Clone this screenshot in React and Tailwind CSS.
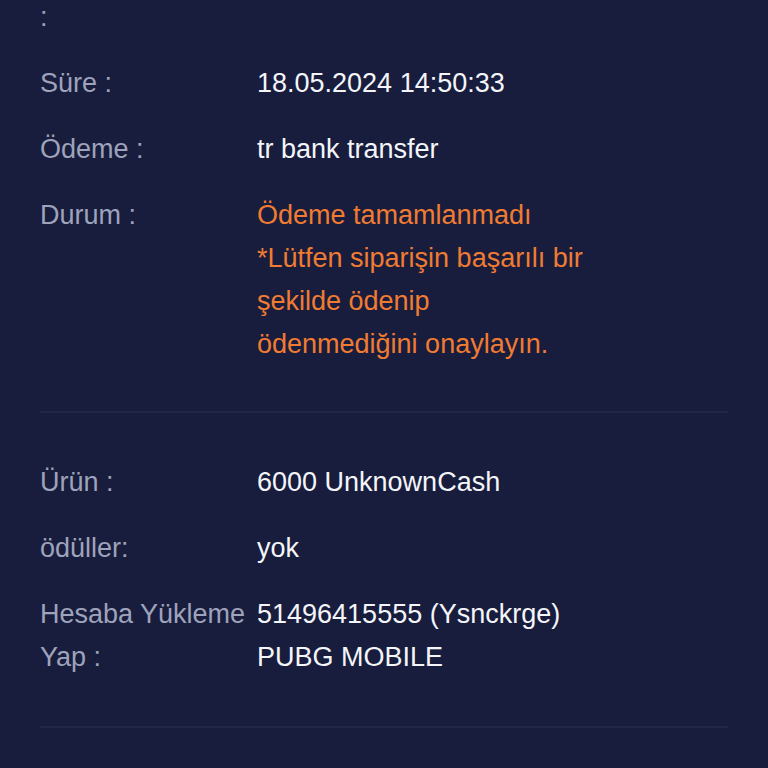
export default function App() {
  const topRows = [
    { label: "Süre :", value: ["18.05.2024 14:50:33"] },
    { label: "Ödeme :", value: ["tr bank transfer"] },
    {
      label: "Durum :",
      value: [
        "Ödeme tamamlanmadı",
        "*Lütfen siparişin başarılı bir",
        "şekilde ödenip",
        "ödenmediğini onaylayın.",
      ],
      warn: true,
    },
  ];

  const bottomRows = [
    { label: "Ürün :", value: ["6000 UnknownCash"] },
    { label: "ödüller:", value: ["yok"] },
    { label: "Hesaba Yükleme Yap :", value: ["51496415555 (Ysnckrge)", "PUBG MOBILE"] },
  ];

  const Row = ({ row }) => (
    <div className="flex">
      <div className="w-[217px] shrink-0 pr-2 text-[#9ea3bb]">{row.label}</div>
      <div className={row.warn ? "text-[#f07b32]" : "text-[#f4f5f9]"}>
        {row.value.map((line) => (
          <div key={line} className="whitespace-nowrap">
            {line}
          </div>
        ))}
      </div>
    </div>
  );

  return (
    <div
      className="h-[768px] w-[768px] overflow-hidden bg-[#181d3d] px-10 text-[27px] leading-[43px]"
      style={{ fontFamily: '"Liberation Sans", Arial, sans-serif' }}
    >
      <div className="-mt-[4px] text-[#9ea3bb]">:</div>

      <div className="mt-[23px] flex flex-col gap-[23px]">
        {topRows.map((row) => (
          <Row key={row.label} row={row} />
        ))}
      </div>

      <div className="mt-[45px] h-[2px] bg-[#22274a]" />

      <div className="mt-[48px] flex flex-col gap-[23px]">
        {bottomRows.map((row) => (
          <Row key={row.label} row={row} />
        ))}
      </div>

      <div className="mt-[47px] h-[2px] bg-[#22274a]" />
    </div>
  );
}
